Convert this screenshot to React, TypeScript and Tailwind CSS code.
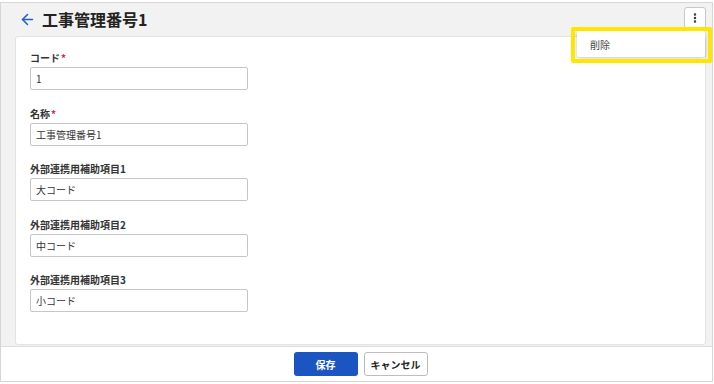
import { ArrowLeft, EllipsisVertical } from 'lucide-react';

const fields = [
  { label: 'コード', required: true, value: '1' },
  { label: '名称', required: true, value: '工事管理番号1' },
  { label: '外部連携用補助項目1', required: false, value: '大コード' },
  { label: '外部連携用補助項目2', required: false, value: '中コード' },
  { label: '外部連携用補助項目3', required: false, value: '小コード' },
];

export default function App() {
  return (
    <div
      className="relative w-[714px] h-[384px] bg-white pt-[2px] text-[#333]"
      style={{ fontFamily: '"Noto Sans CJK JP", "Noto Sans", sans-serif' }}
    >
      <div className="w-[713px] h-[380px] border border-[#d6d6d6] flex flex-col">
        {/* Main area */}
        <div className="flex-1 bg-[#f2f2f2] flex flex-col min-h-0">
          <div className="h-[32px] flex items-center pl-[18px] pr-[6px]">
            <ArrowLeft className="w-[17px] h-[17px] text-[#1f5fcc]" strokeWidth={2.2} />
            <h1 className="ml-[6px] text-[16px] font-bold leading-none text-[#222] -mt-[1px]">工事管理番号1</h1>
            <button className="ml-auto w-[22px] h-[22px] -mt-[3px] bg-white border border-[#c8c8c8] rounded-[3px] flex items-center justify-center">
              <EllipsisVertical className="w-[12px] h-[12px] text-[#333]" strokeWidth={3} />
            </button>
          </div>

          <div className="ml-[14px] mr-[6px] mt-[1px] h-[309px] bg-white border border-[#e2e2e2] rounded-[3px] px-[14px] pt-[14px]">
            <div className="flex flex-col gap-[16.5px]">
              {fields.map((f) => (
                <div key={f.label} className="flex flex-col">
                  <label className="text-[10px] font-bold leading-[14px] h-[14px] text-[#333]">
                    {f.label}
                    {f.required && <span className="text-[#e0243b] ml-[1px]">*</span>}
                  </label>
                  <div className="mt-[2px] w-[218px] h-[23px] border border-[#c6c6c6] rounded-[2px] flex items-center px-[5px] text-[10px] text-[#333]">
                    {f.value}
                  </div>
                </div>
              ))}
            </div>
          </div>
          <div className="flex-1" />
        </div>

        {/* Footer */}
        <div className="h-[35px] bg-white border-t border-[#dcdcdc] flex items-center justify-center gap-[6px] pl-[8px]">
          <button className="w-[64px] h-[24px] rounded-[3px] bg-[#1a55c2] text-white text-[10px] font-bold">保存</button>
          <button className="w-[64px] h-[24px] rounded-[3px] bg-white border border-[#bdbdbd] text-[#222] text-[10px] font-bold">キャンセル</button>
        </div>
      </div>

      {/* Dropdown menu */}
      <div className="absolute left-[577px] top-[31px] w-[128px] h-[26px] bg-white rounded-[3px] shadow-[0_1px_4px_rgba(0,0,0,0.25)] flex items-center pl-[13px] text-[10px] text-[#444]">
        削除
      </div>
      {/* Highlight */}
      <div className="absolute left-[571px] top-[27px] w-[141px] h-[36px] border-[4px] border-[#ffe500] rounded-[2px] pointer-events-none" />
    </div>
  );
}
